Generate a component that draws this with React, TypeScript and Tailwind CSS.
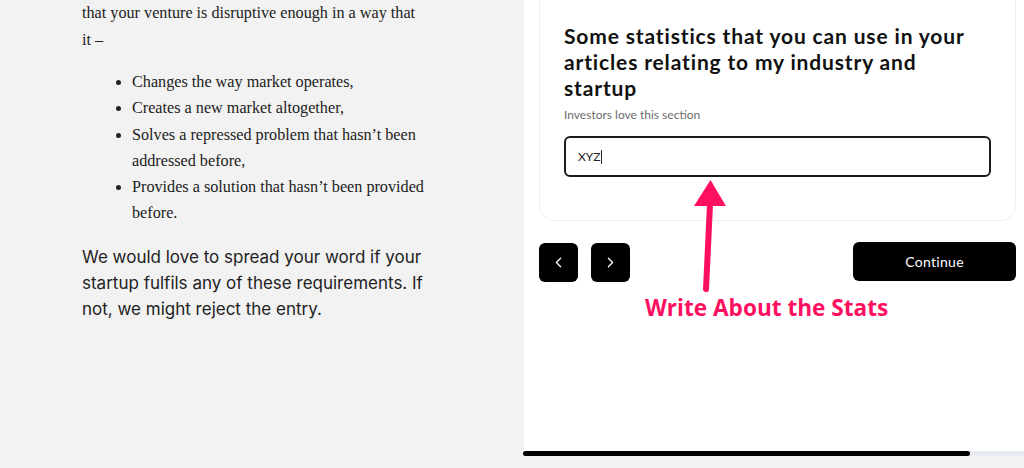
import React from 'react';
import { ChevronLeft, ChevronRight } from 'lucide-react';

const bullets = [
  'Changes the way market operates,',
  'Creates a new market altogether,',
  'Solves a repressed problem that hasn\u2019t been addressed before,',
  'Provides a solution that hasn\u2019t been provided before.',
];

const App: React.FC = () => {
  return (
    <div className="relative w-[1024px] h-[468px] overflow-hidden bg-[#f2f2f2]">
      <div className="flex h-[451px]">
        {/* article column */}
        <div className="w-[524px] shrink-0 pl-[82px] pr-[98px]">
          <p className="font-['Liberation_Serif',serif] text-[16.2px] leading-[26.5px] text-[#222]">
            that your venture is disruptive enough in a way that it &ndash;
          </p>
          <ul className="mt-[16px] pl-[50px] list-disc font-['Liberation_Serif',serif] text-[16.2px] leading-[26.3px] text-[#222]">
            {bullets.map((b, i) => (
              <li key={i}>{b}</li>
            ))}
          </ul>
          <p className="mt-[17px] font-['Inter',sans-serif] text-[17px] leading-[26px] text-[#222]">
            We would love to spread your word if your startup fulfils any of these requirements. If not, we might reject the entry.
          </p>
        </div>

        {/* form column */}
        <div className="flex-1 bg-white pl-[15px] pr-[8px]">
          <div className="-mt-5 pt-[42px] pb-[43px] px-[24px] rounded-2xl border border-[#eceef4] bg-white">
            <h2 className="font-['Lato',sans-serif] font-bold text-[21px] leading-[26px] tracking-[0.85px] text-[#111] pr-4">
              Some statistics that you can use in your articles relating to my industry and startup
            </h2>
            <p className="mt-[7px] font-['Lato',sans-serif] text-[12px] leading-[14px] text-[#6b6b6b]">
              Investors love this section
            </p>
            <div className="mt-[14px] h-[41px] rounded-md border-2 border-[#1c1c1c] flex items-center px-[12px]">
              <span className="font-['Lato',sans-serif] text-[12px] text-[#222]">XYZ</span>
              <span className="w-px h-[14px] bg-[#222]" />
            </div>
          </div>

          <div className="mt-[22px] flex items-center">
            <button className="w-[39px] h-[39px] rounded-md bg-black flex items-center justify-center text-white">
              <ChevronLeft size={17} strokeWidth={1.8} />
            </button>
            <button className="ml-[13px] w-[39px] h-[39px] rounded-md bg-black flex items-center justify-center text-white">
              <ChevronRight size={17} strokeWidth={1.8} />
            </button>
            <button className="ml-auto w-[163px] h-[39px] -mt-[2px] rounded-md bg-black text-white font-['Lato',sans-serif] font-normal text-[14px] tracking-[0.3px]">
              Continue
            </button>
          </div>
        </div>
      </div>

      {/* scrollbar */}
      <div className="flex h-[5px]">
        <div className="w-[523px]" />
        <div className="w-[447px] rounded-full bg-black" />
        <div className="flex-1 bg-[#e9edf2]" />
      </div>

      {/* annotation */}
      <svg className="absolute left-0 top-0 pointer-events-none" width="1024" height="468" viewBox="0 0 1024 468">
        <polygon points="710.5,180 694,206 726,206" fill="#ff0f5f" />
        <line x1="710" y1="204" x2="706" y2="289" stroke="#ff0f5f" strokeWidth="6" strokeLinecap="round" />
      </svg>
      <div className="absolute left-[645px] top-[295px] font-['Open_Sans',sans-serif] font-bold text-[22.6px] leading-[26px] text-[#ff0f5f] whitespace-nowrap">
        Write About the Stats
      </div>
    </div>
  );
};

export default App;
